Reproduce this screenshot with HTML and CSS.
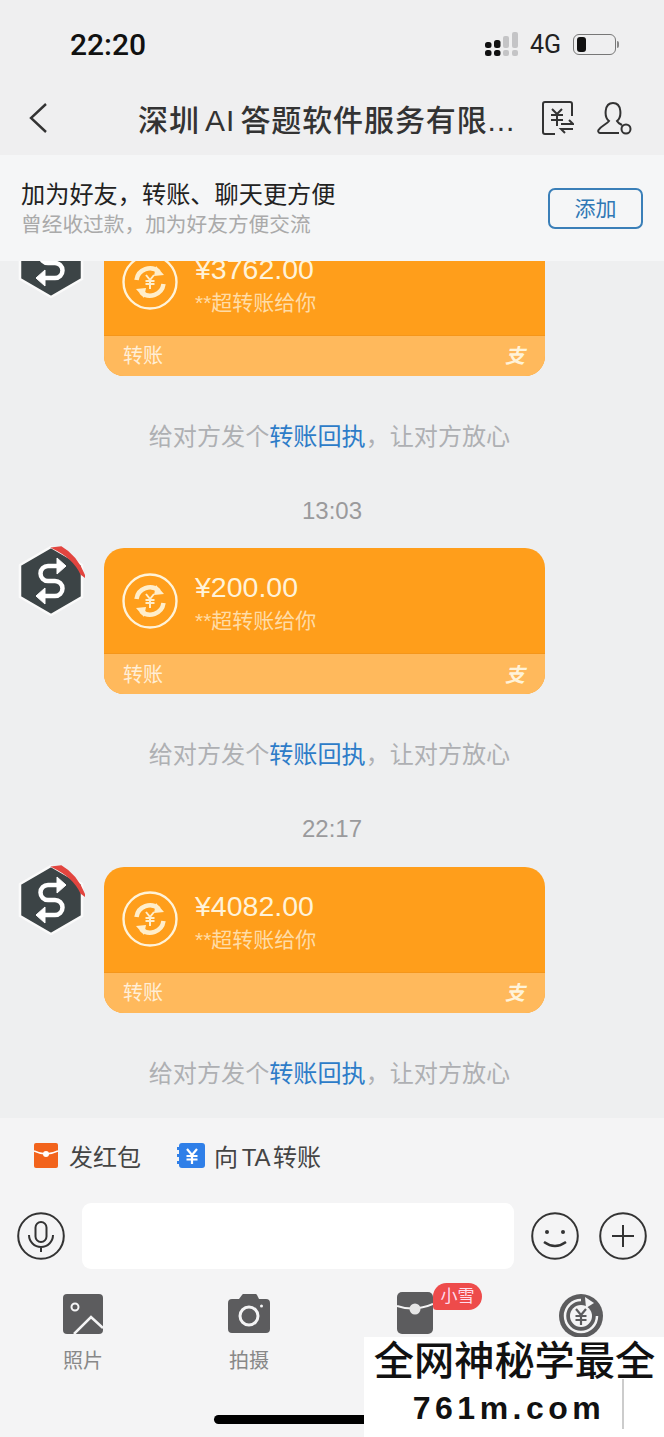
FILE: index.html
```html
<!DOCTYPE html>
<html lang="zh-CN">

<head>
    <title>转账聊天</title>
    <meta name="viewport" content="width=device-width, initial-scale=1">
    <link rel="stylesheet" href="styles.css">
</head>

<body>
    <svg class="defs" width="0" height="0">
        <symbol id="avatar" viewBox="-3 -1 68 70">
            <path d="M31 0 L62 18 V50 L31 68 L0 50 V18 Z" fill="#3c4446" stroke="#fafafa" stroke-width="2.500" stroke-linejoin="round" />
            <path d="M33 1 L41 0 Q57 9 65 30 L61 27 Q54 11 33 1 Z" fill="#e2453f" stroke="#e2453f" stroke-width="1.500" />
            <path d="M40 19 H28 a7.500 7.500 0 0 0 0 15 H35 a7.500 7.500 0 0 1 0 15 H22" fill="none" stroke="#fff" stroke-width="4.500" />
            <path d="M37 11 L46 19 L37 27 Z M25 41 L16 49 L25 57 Z" fill="#fff" stroke="#fff" stroke-linejoin="round" />
        </symbol>
        <symbol id="coin" viewBox="0 0 56 56">
            <circle cx="28" cy="28" r="26.500" fill="none" stroke="#fff3d9" stroke-width="2.400" />
            <path d="M14.500 26 A13.500 13.500 0 0 1 37 18" fill="none" stroke="#ffeecb" stroke-width="4.500" />
            <path d="M41.500 30 A13.500 13.500 0 0 1 19 38" fill="none" stroke="#ffeecb" stroke-width="4.500" />
            <path d="M34 12 L42 21 L32 22 Z M22 44 L14 35 L24 34 Z" fill="#ffeecb" />
            <path d="M24 21 L28 26 L32 21 M23.500 27 H32.500 M23.500 30 H32.500 M28 26 V35" fill="none" stroke="#ffeecb" stroke-width="2" />
        </symbol>
    </svg>

    <div class="top">
        <div class="status-bar">
            <span class="clock">22:20</span>
            <div class="status-right">
                <svg class="signal" width="34" height="24" viewBox="0 0 34 24">
                    <g fill="#111">
                        <rect x="0" y="10" width="6.500" height="6" rx="2.500" />
                        <rect x="0" y="18" width="6.500" height="6" rx="2.500" />
                        <rect x="9" y="8" width="6.500" height="8" rx="2.500" />
                        <rect x="9" y="18" width="6.500" height="6" rx="2.500" />
                    </g>
                    <g fill="#c4c4c6">
                        <rect x="18" y="4" width="6" height="12" rx="2" />
                        <rect x="18" y="18" width="6" height="6" rx="2" />
                        <rect x="27" y="0" width="6" height="16" rx="2" />
                        <rect x="27" y="18" width="6" height="6" rx="2" />
                    </g>
                </svg>
                <span class="net">4G</span>
                <div class="battery">
                    <div class="battery-level"></div>
                </div>
            </div>
        </div>
        <div class="nav">
            <svg class="back" width="20" height="32" viewBox="0 0 20 32">
                <path d="M18 2 L3 16 L18 30" fill="none" stroke="#333" stroke-width="2.400" />
            </svg>
            <h1 class="title">深圳 AI 答题软件服务有限...</h1>
            <div class="nav-icons">
                <svg width="32" height="35" viewBox="0 0 32 35">
                    <path d="M30 15 V3 a2 2 0 0 0 -2 -2 H3 a2 2 0 0 0 -2 2 V31 a2 2 0 0 0 2 2 H13" fill="none" stroke="#333" stroke-width="2" />
                    <path d="M10 8 L15 13 L20 8 M9 14 H21 M9 19 H21 M15 13 V25" fill="none" stroke="#333" stroke-width="2" />
                    <path d="M19 23 H31 L27 19 M31 28 H19 L23 32" fill="none" stroke="#333" stroke-width="2" />
                </svg>
                <svg width="35" height="34" viewBox="0 0 35 34">
                    <path d="M22 32 H3 a2 2 0 0 1 -1.500 -3 C4 25 10 23 12 20 C7 16 7 2 16 2 C25 2 25 16 20 20 C21 22 23 23 25 24" fill="none" stroke="#333" stroke-width="2" />
                    <circle cx="29" cy="28" r="4.500" fill="none" stroke="#333" stroke-width="2" />
                </svg>
            </div>
        </div>
    </div>

    <div class="banner">
        <div>
            <div class="banner-title">加为好友&#xFF0C;转账、聊天更方便</div>
            <div class="banner-sub">曾经收过款&#xFF0C;加为好友方便交流</div>
        </div>
        <div class="add-btn">添加</div>
    </div>

    <div class="chat">
        <div class="messages">
            <div class="msg">
                <svg class="avatar"><use href="#avatar" /></svg>
                <div class="card">
                    <div class="card-main">
                        <svg class="coin"><use href="#coin" /></svg>
                        <div>
                            <div class="amount">¥3762.00</div>
                            <div class="from">**超转账给你</div>
                        </div>
                    </div>
                    <div class="card-foot"><span>转账</span><span class="ali">支</span></div>
                </div>
            </div>
            <div class="hint">给对方发个<a class="link">转账回执</a>&#xFF0C;让对方放心</div>

            <div class="time">13:03</div>
            <div class="msg">
                <svg class="avatar"><use href="#avatar" /></svg>
                <div class="card">
                    <div class="card-main">
                        <svg class="coin"><use href="#coin" /></svg>
                        <div>
                            <div class="amount">¥200.00</div>
                            <div class="from">**超转账给你</div>
                        </div>
                    </div>
                    <div class="card-foot"><span>转账</span><span class="ali">支</span></div>
                </div>
            </div>
            <div class="hint">给对方发个<a class="link">转账回执</a>&#xFF0C;让对方放心</div>

            <div class="time">22:17</div>
            <div class="msg">
                <svg class="avatar"><use href="#avatar" /></svg>
                <div class="card">
                    <div class="card-main">
                        <svg class="coin"><use href="#coin" /></svg>
                        <div>
                            <div class="amount">¥4082.00</div>
                            <div class="from">**超转账给你</div>
                        </div>
                    </div>
                    <div class="card-foot"><span>转账</span><span class="ali">支</span></div>
                </div>
            </div>
            <div class="hint">给对方发个<a class="link">转账回执</a>&#xFF0C;让对方放心</div>
        </div>
    </div>

    <div class="panel">
        <div class="quick">
            <div class="quick-item">
                <svg width="24" height="25" viewBox="0 0 24 25">
                    <rect width="24" height="25" rx="2" fill="#f2631c" />
                    <path d="M0 8 Q12 14 24 8" fill="none" stroke="#fff" stroke-width="1.500" />
                    <circle cx="12" cy="11" r="3" fill="#fff" />
                </svg>
                <span>发红包</span>
            </div>
            <div class="quick-item">
                <svg width="28" height="25" viewBox="0 0 28 25">
                    <rect x="2" width="26" height="25" rx="3" fill="#2f7fe8" />
                    <path d="M2 4 h-2 v3 h2 M2 11 h-2 v3 h2 M2 18 h-2 v3 h2" fill="#2f7fe8" />
                    <path d="M10 6 L15 12 L20 6 M9.500 13 H20.500 M9.500 16.500 H20.500 M15 12 V21" fill="none" stroke="#fff" stroke-width="2.200" />
                </svg>
                <span class="to-ta">向 TA 转账</span>
            </div>
        </div>

        <div class="input-row">
            <svg class="round-btn" width="48" height="48" viewBox="0 0 48 48">
                <circle cx="24" cy="24" r="22.800" fill="none" stroke="#333" stroke-width="2" />
                <rect x="18.500" y="10" width="11" height="20" rx="5.500" fill="none" stroke="#333" stroke-width="2" />
                <path d="M12 23 a12 12 0 0 0 24 0 M24 35 V40" fill="none" stroke="#333" stroke-width="2" />
            </svg>
            <div class="input-box"></div>
            <svg class="round-btn" width="48" height="48" viewBox="0 0 48 48">
                <circle cx="24" cy="24" r="22.800" fill="none" stroke="#333" stroke-width="2" />
                <circle cx="16" cy="20" r="2" fill="#333" />
                <circle cx="32" cy="20" r="2" fill="#333" />
                <path d="M13 30 Q24 38 35 30" fill="none" stroke="#333" stroke-width="2.400" />
            </svg>
            <svg class="round-btn" width="48" height="48" viewBox="0 0 48 48">
                <circle cx="24" cy="24" r="22.800" fill="none" stroke="#333" stroke-width="2" />
                <path d="M24 13 V35 M13 24 H35" fill="none" stroke="#333" stroke-width="2" />
            </svg>
        </div>

        <div class="tools">
            <div class="tool">
                <svg width="40" height="40" viewBox="0 0 40 40">
                    <rect width="40" height="40" rx="4" fill="#5c5c5e" />
                    <circle cx="12" cy="13" r="3.500" fill="none" stroke="#f4f4f5" stroke-width="2" />
                    <path d="M11 40 L28 23 L40 34" fill="none" stroke="#f4f4f5" stroke-width="2.500" />
                </svg>
                <span>照片</span>
            </div>
            <div class="tool">
                <svg width="42" height="40" viewBox="0 0 42 40">
                    <path d="M4 5 H11 L14 1 a2 2 0 0 1 2 -1 H27 a2 2 0 0 1 2 1 L31 5 H38 a4 4 0 0 1 4 4 V35 a4 4 0 0 1 -4 4 H4 a4 4 0 0 1 -4 -4 V9 a4 4 0 0 1 4 -4 Z" fill="#5c5c5e" />
                    <circle cx="21" cy="22" r="9" fill="none" stroke="#f4f4f5" stroke-width="3" />
                    <circle cx="33.500" cy="12" r="1.500" fill="#f4f4f5" />
                </svg>
                <span>拍摄</span>
            </div>
            <div class="tool">
                <div class="packet">
                    <svg width="36" height="42" viewBox="0 0 36 42">
                        <rect width="36" height="42" rx="5" fill="#5c5c5e" />
                        <path d="M0 14 Q18 20 36 12" fill="none" stroke="#f4f4f5" stroke-width="2" />
                        <circle cx="18" cy="17" r="5.500" fill="#e6e6e6" />
                    </svg>
                    <span class="badge">小雪</span>
                </div>
            </div>
            <div class="tool">
                <svg width="44" height="44" viewBox="0 0 44 44">
                    <circle cx="22" cy="22" r="22" fill="#5c5c5e" />
                    <path d="M22 6 A16 16 0 1 0 38 22" fill="none" stroke="#f4f4f5" stroke-width="2.500" />
                    <path d="M26 3 L35 9 L27 14 Z" fill="#f4f4f5" />
                    <circle cx="22" cy="22" r="11" fill="#f4f4f5" />
                    <path d="M17 15 L22 21 L27 15 M16.500 22 H27.500 M16.500 26 H27.500 M22 21 V31" fill="none" stroke="#5c5c5e" stroke-width="2.200" />
                </svg>
            </div>
        </div>
    </div>

    <div class="home-bar"></div>

    <div class="watermark">
        <div class="wm-line1">全网神秘学最全</div>
        <div class="wm-line2">761m.com</div>
        <div class="wm-rule"></div>
    </div>
</body>

</html>
```

FILE: styles.css
```css
* {
    box-sizing: border-box;
}

body {
    position: relative;
    display: flex;
    flex-direction: column;
    width: 664px;
    height: 1437px;
    margin: 0;
    overflow: hidden;
    background: #eeeff0;
    font-family: "Liberation Sans", "Noto Sans CJK SC", sans-serif;
}

.defs {
    position: absolute;
}

/* Status bar and title */
.top {
    height: 155px;
    background: #efeff0;
}

.status-bar {
    display: flex;
    justify-content: space-between;
    align-items: center;
    height: 88px;
    padding: 0 45px 0 70px;
}

.clock {
    font-family: Roboto, "Liberation Sans", sans-serif;
    font-size: 30px;
    font-weight: 500;
    color: #111;
}

.status-right {
    display: flex;
    align-items: center;
}

.net {
    margin: 0 12px 0 11px;
    font-family: Roboto, "Liberation Sans", sans-serif;
    font-size: 25px;
    color: #222;
}

.battery {
    position: relative;
    width: 43px;
    height: 21px;
    margin-right: 3px;
    padding: 2px 3px;
    border: 1px solid #777;
    border-radius: 6px;
}

.battery:after {
    content: "";
    position: absolute;
    top: 6px;
    right: -4px;
    width: 2px;
    height: 7px;
    border-radius: 0 2px 2px 0;
    background: #888;
}

.battery-level {
    width: 9px;
    height: 15px;
    border-radius: 3px;
    background: #111;
}

.nav {
    display: flex;
    align-items: center;
    height: 60px;
    padding-left: 28px;
}

.title {
    width: 386px;
    margin: 0 0 0 90px;
    font-size: 30px;
    font-weight: 500;
    letter-spacing: .9px;
    word-spacing: -4px;
    white-space: nowrap;
    color: #333;
}

.nav-icons {
    display: flex;
    align-items: center;
    gap: 23px;
    margin-left: 18px;
}

/* Add friend banner */
.banner {
    display: flex;
    justify-content: space-between;
    align-items: center;
    height: 106px;
    padding: 0 21px;
    background: #f5f6f7;
}

.banner-title {
    font-size: 24.2px;
    line-height: 33px;
    color: #222;
}

.banner-sub {
    font-size: 20.7px;
    line-height: 28px;
    color: #aaa;
}

.add-btn {
    width: 95px;
    height: 41px;
    border: 2px solid #3a7fb8;
    border-radius: 7px;
    font-size: 21px;
    line-height: 37px;
    text-align: center;
    color: #2f78b5;
}

/* Chat messages */
.chat {
    flex: 1;
    min-height: 0;
    overflow: hidden;
}

.messages {
    margin-top: -31.5px;
}

.msg {
    display: flex;
    align-items: flex-start;
    gap: 22px;
    padding-left: 20px;
}

.avatar {
    flex: none;
    width: 68px;
    height: 70px;
    margin: -2px -3px 0;
}

.card {
    width: 441px;
    height: 146px;
    overflow: hidden;
    border-radius: 20px;
    background: #ff9e1b;
}

.card-main {
    display: flex;
    align-items: center;
    gap: 17px;
    height: 106px;
    padding-left: 18px;
    border-bottom: 1px solid #f5961a;
}

.coin {
    flex: none;
    width: 56px;
    height: 56px;
}

.amount {
    padding-top: 4px;
    font-size: 28.5px;
    line-height: 36px;
    color: #fff3d9;
}

.from {
    font-size: 21px;
    line-height: 31px;
    color: #ffdca6;
}

.card-foot {
    display: flex;
    justify-content: space-between;
    align-items: center;
    height: 40px;
    padding: 0 20px 2px 19px;
    background: #ffb95c;
    font-size: 20px;
    color: #ffeed6;
}

.ali {
    font-style: italic;
    font-weight: 700;
    color: #fff3d9;
}

.hint {
    margin-top: 44px;
    padding-right: 5px;
    font-size: 24.1px;
    line-height: 34px;
    text-align: center;
    color: #aeb0b3;
}

.link {
    color: #2d7cc8;
}

.time {
    margin: 40px 0 20.5px;
    font-size: 24px;
    line-height: 34px;
    text-align: center;
    color: #9a9a9c;
}

/* Bottom panel */
.panel {
    flex: none;
    height: 319px;
    background: #f4f4f5;
}

.quick {
    display: flex;
    gap: 36px;
    height: 85px;
    padding: 25px 0 0 34px;
}

.quick-item {
    display: flex;
    align-items: center;
    gap: 11px;
    height: 25px;
    font-size: 24px;
    color: #444;
}

.to-ta {
    margin-left: -2px;
    word-spacing: -3px;
}

.input-row {
    display: flex;
    align-items: center;
    height: 66px;
    padding-left: 17px;
}

.input-box {
    width: 432px;
    height: 66px;
    margin: 0 17px;
    border-radius: 9px;
    background: #fff;
}

.round-btn {
    flex: none;
}

.round-btn:last-child {
    margin-left: 20px;
}

.tools {
    display: grid;
    grid-template-columns: repeat(4, 166px);
    padding-top: 25px;
}

.tool {
    display: flex;
    flex-direction: column;
    align-items: center;
    gap: 12px;
    font-size: 20px;
    line-height: 30px;
    color: #888;
}

.packet {
    position: relative;
    width: 36px;
    margin-top: -2px;
}

.badge {
    position: absolute;
    top: -9px;
    left: 36px;
    width: 49px;
    height: 27px;
    border-radius: 14px 14px 14px 4px;
    background: #ee4b4b;
    font-size: 17px;
    line-height: 27px;
    text-align: center;
    color: #fde;
}

.home-bar {
    position: absolute;
    left: 214px;
    top: 1415px;
    width: 240px;
    height: 9px;
    border-radius: 5px;
    background: #000;
}

/* Watermark pasted over the corner */
.watermark {
    position: absolute;
    left: 364px;
    top: 1337px;
    width: 300px;
    height: 100px;
    background: #fff;
    color: #111;
    font-family: "Noto Sans CJK SC", sans-serif;
    font-weight: 500;
    text-align: center;
}

.wm-line1 {
    padding-left: 1px;
    font-size: 40.2px;
    line-height: 42px;
}

.wm-line2 {
    margin-top: 6px;
    padding-right: 10px;
    font-family: "Liberation Sans", sans-serif;
    font-size: 32px;
    font-weight: 700;
    line-height: 46px;
    letter-spacing: 4.5px;
}

.wm-rule {
    position: absolute;
    left: 258px;
    top: 42px;
    width: 2px;
    height: 50px;
    background: #ccc;
}
```
